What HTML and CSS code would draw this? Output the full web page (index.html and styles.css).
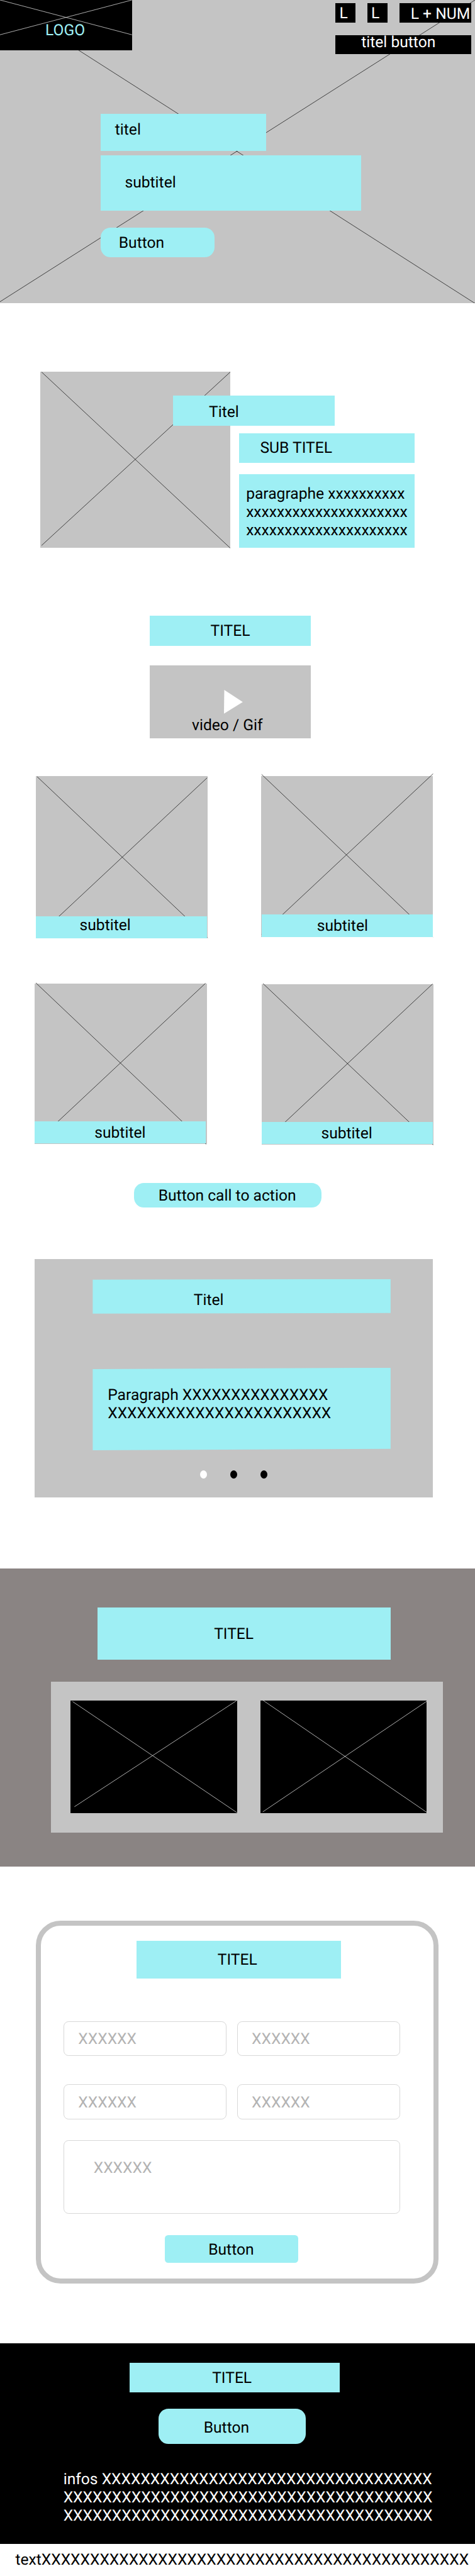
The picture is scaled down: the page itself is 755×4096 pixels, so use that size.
FILE: index.html
```
<!DOCTYPE html>
<html lang="en">
<head>
<meta charset="utf-8">
<title>Wireframe</title>
<link rel="stylesheet" href="styles.css">
</head>
<body>
<header class="hero">
  <svg class="cross" viewBox="0 0 1440 920" preserveAspectRatio="none"><path d="M0 0L1440 920M1440 0L0 915"/></svg>
  <div class="topbar">
    <div class="logo">
      <svg class="cross cross-light" viewBox="0 0 400 152"><path d="M0 0L400 105.5M0 105.5L400 0"/></svg>
      <span class="logo-text">LOGO</span>
    </div>
    <nav class="nav">
      <a class="chip chip-a">L</a>
      <a class="chip chip-b">L</a>
      <a class="chip chip-num">L + NUM</a>
      <a class="chip chip-wide">titel button</a>
    </nav>
  </div>
  <h1 class="box hero-title">titel</h1>
  <p class="box hero-sub">subtitel</p>
  <a class="box hero-button">Button</a>
</header>

<section class="about">
  <div class="about-image">
    <svg class="cross" viewBox="122 1127 576 535"><path d="M126 1128L698 1662M698 1128L126 1654"/></svg>
  </div>
  <div class="about-copy">
    <h2 class="box about-title">Titel</h2>
    <h3 class="box about-sub">SUB TITEL</h3>
    <p class="box about-text">paragraphe xxxxxxxxxx<br>xxxxxxxxxxxxxxxxxxxxx<br>xxxxxxxxxxxxxxxxxxxxx</p>
  </div>
</section>

<section class="gallery">
  <h2 class="box gallery-title">TITEL</h2>
  <div class="video">
    <svg class="play" viewBox="0 0 57 72"><path d="M.9 0L57 36.6L0 72Z"/></svg>
    <span class="video-text">video / Gif</span>
  </div>
  <div class="cards">
    <figure class="card card-1">
      <svg class="cross" viewBox="108 2354 520 486"><path d="M112 2356L628 2844M626.5 2359L108 2844"/></svg>
      <figcaption class="box">subtitel</figcaption>
    </figure>
    <figure class="card card-2">
      <svg class="cross" viewBox="791 2354 520 486"><path d="M792.5 2349L1311 2841M1311.4 2347L792.5 2832.5"/></svg>
      <figcaption class="box">subtitel</figcaption>
    </figure>
    <figure class="card card-3">
      <svg class="cross" viewBox="105.6 2982 521 487"><path d="M109.3 2979.7L625.5 3469M623.6 2981L105.6 3466.5"/></svg>
      <figcaption class="box">subtitel</figcaption>
    </figure>
    <figure class="card card-4">
      <svg class="cross" viewBox="105.6 2982 521 487"><path d="M109.3 2979.7L625.5 3469M623.6 2981L105.6 3466.5"/></svg>
      <figcaption class="box">subtitel</figcaption>
    </figure>
  </div>
  <a class="box cta">Button call to action</a>
</section>

<section class="slider">
  <h2 class="box slider-title">Titel</h2>
  <p class="box slider-text">Paragraph XXXXXXXXXXXXXXX<br>XXXXXXXXXXXXXXXXXXXXXXX</p>
  <div class="dots"><i class="dot dot-on"></i><i class="dot"></i><i class="dot"></i></div>
</section>

<section class="showcase">
  <h2 class="box showcase-title">TITEL</h2>
  <div class="panel">
    <div class="tile"><svg class="cross cross-light" viewBox="214 5157 505 341"><path d="M220.4 5160L719 5497M718 5157L226 5479"/></svg></div>
    <div class="tile"><svg class="cross cross-light" viewBox="789 5157.5 505 341"><path d="M797 5157L1294 5497M1294 5159L796 5495"/></svg></div>
  </div>
</section>

<form class="contact">
  <h2 class="box contact-title">TITEL</h2>
  <div class="fields">
    <div class="field">XXXXXX</div>
    <div class="field">XXXXXX</div>
    <div class="field">XXXXXX</div>
    <div class="field">XXXXXX</div>
    <div class="field field-large">XXXXXX</div>
  </div>
  <a class="box contact-button">Button</a>
</form>

<footer class="footer">
  <h2 class="box footer-title">TITEL</h2>
  <a class="box footer-button">Button</a>
  <p class="infos">infos XXXXXXXXXXXXXXXXXXXXXXXXXXXXXXXXXX<br>XXXXXXXXXXXXXXXXXXXXXXXXXXXXXXXXXXXXXX<br>XXXXXXXXXXXXXXXXXXXXXXXXXXXXXXXXXXXXXX</p>
</footer>
<p class="legal">textXXXXXXXXXXXXXXXXXXXXXXXXXXXXXXXXXXXXXXXXXXXX</p>
</body>
</html>
```
FILE: styles.css
```
/* 1rem = 100 design units */
html { font-size: 52.434px; }
* { box-sizing: border-box; margin: 0; padding: 0; }
body {
  width: 100%;
  height: 4096px;
  overflow: hidden;
  background: #fff;
  color: #000;
  font: 400 .47rem/.552rem Roboto, sans-serif;
  white-space: nowrap;
  text-rendering: geometricPrecision;
}
h1, h2, h3 { font: inherit; }
a, span, i { display: block; }
.box { display: block; background: #9eeff4; }
.cross { position: absolute; inset: 0; width: 100%; height: 100%; fill: none; stroke: #000; stroke-width: 1.3; overflow: visible; }
.cross-light { stroke: #fff; }

.hero { position: relative; height: 9.2rem; background: #c4c4c4; overflow: hidden; }
.topbar { position: relative; display: flex; justify-content: space-between; height: 3.45rem; }
.logo { position: relative; width: 4rem; height: 1.52rem; background: #000; color: #9eeff4; padding: .667rem 0 0 1.374rem; }
.logo-text { position: relative; }
.nav { display: grid; grid-template-columns: .615rem .615rem 2.17rem; column-gap: .357rem; row-gap: .38rem; align-content: start; width: 4.234rem; padding-top: .1rem; }
.chip { height: .58rem; background: #000; color: #fff; }
.chip-a { padding: .057rem 0 0 .125rem; }
.chip-b { padding: .057rem 0 0 .115rem; }
.chip-num { padding: .074rem 0 0 .34rem; }
.chip-wide { grid-column: 1 / -1; width: 4.12rem; padding-left: .785rem; line-height: .45rem; }
.hero-title { position: relative; width: 5.01rem; height: 1.13rem; margin-left: 3.06rem; padding: .239rem 0 0 .425rem; }
.hero-sub { position: relative; width: 7.89rem; height: 1.67rem; margin: .14rem 0 0 3.06rem; padding: .569rem 0 0 .725rem; }
.hero-button { position: relative; width: 3.44rem; height: .89rem; margin: .52rem 0 0 3.06rem; padding: .204rem 0 0 .54rem; border-radius: .3rem; }

.about { display: flex; margin: 2.07rem 0 0 1.22rem; height: 5.35rem; }
.about-image { position: relative; width: 5.76rem; background: #c4c4c4; }
.about-copy { position: relative; margin-left: .265rem; padding-top: .73rem; }
.about-title { width: 4.9rem; height: .91rem; margin-left: -2rem; padding: .239rem 0 0 1.086rem; }
.about-sub { width: 5.33rem; height: .9rem; margin-top: .23rem; padding: .199rem 0 0 .64rem; }
.about-text { width: 5.33rem; height: 2.23rem; margin-top: .35rem; padding: .329rem 0 0 .215rem; }

.gallery { padding-top: 2.05rem; }
.gallery-title { width: 4.9rem; height: .91rem; margin-left: 4.53rem; padding: .219rem 0 0 1.85rem; }
.video { width: 4.89rem; height: 2.23rem; margin: .59rem 0 0 4.54rem; padding-top: .75rem; background: #c4c4c4; }
.play { display: block; width: .57rem; height: .72rem; margin-left: 2.25rem; fill: #fff; }
.video-text { margin: .105rem 0 0 1.277rem; }
.cards { display: grid; grid-template-columns: 5.21rem 5.21rem; column-gap: 1.66rem; row-gap: 1.41rem; margin: 1.14rem 0 0 1.056rem; }
.card { position: relative; display: flex; flex-direction: column; justify-content: flex-end; height: 4.87rem; background: #c4c4c4; }
.card .box { position: relative; width: 5.19rem; height: .67rem; }
.card-1 { margin: 0 -.028rem 0 .028rem; }
.card-1 .box { margin-bottom: -.04rem; padding: .03rem 0 0 1.33rem; }
.card-2 { margin: 0 .019rem 0 -.019rem; }
.card-2 .box { align-self: flex-end; padding: .085rem 0 0 1.68rem; }
.card-3, .card-4 { padding-bottom: .02rem; }
.card-4 { margin: .02rem 0 -.02rem; }
.card-3 .box, .card-4 .box { padding: .105rem 0 0 1.81rem; }
.cta { width: 5.68rem; height: .75rem; margin: 1.18rem 0 0 4.06rem; padding: .143rem 0 0 .74rem; border-radius: .3rem; }

.slider { width: 12.06rem; height: 7.23rem; margin: 1.57rem 0 0 1.056rem; padding: .6rem 0 0 1.755rem; background: #c4c4c4; }
.slider-title { width: 9.03rem; height: 1.05rem; padding: .379rem 0 0 3.06rem; clip-path: polygon(0 .02rem, 100% 0, 100% 1.03rem, 0 100%); }
.slider-text { width: 9.03rem; height: 2.5rem; margin-top: 1.64rem; padding: .569rem 0 0 .455rem; clip-path: polygon(0 .04rem, 100% 0, 100% 2.46rem, 0 100%); }
.dots { display: flex; gap: .7rem; margin: .62rem 0 0 3.26rem; }
.dot { width: .21rem; height: .25rem; border-radius: 50%; background: #000; }
.dot-on { background: #fff; }

.showcase { height: 9.03rem; margin-top: 2.15rem; padding-top: 1.18rem; background: #8a8483; }
.showcase-title { width: 8.88rem; height: 1.58rem; margin-left: 2.957rem; padding: .549rem 0 0 3.53rem; }
.panel { display: flex; gap: .7rem; width: 11.875rem; height: 4.56rem; margin: .68rem 0 0 1.552rem; padding: .565rem 0 0 .588rem; background: #c4c4c4; }
.tile { position: relative; width: 5.05rem; height: 3.41rem; background: #000; }

.contact { width: 12.2rem; height: 11rem; margin: 1.65rem 0 0 1.093rem; padding: .45rem 0 0 .677rem; border: .16rem solid #c4c4c4; border-radius: .75rem; }
.contact-title { width: 6.2rem; height: 1.15rem; margin-left: 2.212rem; padding: .339rem 0 0 2.46rem; }
.fields { display: grid; grid-template-columns: 4.94rem 4.94rem; gap: .86rem .32rem; margin-top: 1.29rem; }
.field { height: 1.06rem; padding: .275rem 0 0 .43rem; border: 1px solid #d8d8d8; border-radius: .15rem; color: #b3b3b3; }
.field-large { grid-column: 1 / -1; height: 2.23rem; margin-top: -.22rem; padding: .555rem 0 0 .895rem; }
.contact-button { width: 4.03rem; height: .85rem; margin: .64rem 0 0 3.084rem; padding: .189rem 0 0 1.31rem; border-radius: .1rem; }

.footer { height: 6.09rem; margin-top: 1.81rem; padding-top: .59rem; background: #000; color: #fff; }
.footer .box { color: #000; }
.footer-title { width: 6.36rem; height: .9rem; margin-left: 3.93rem; padding: .209rem 0 0 2.5rem; }
.footer-button { width: 4.46rem; height: 1.06rem; margin: .5rem 0 0 4.803rem; padding: .329rem 0 0 1.37rem; border-radius: .3rem; }
.infos { margin: .829rem 0 0 1.92rem; }
.legal { margin: .229rem 0 0 .465rem; }
```
